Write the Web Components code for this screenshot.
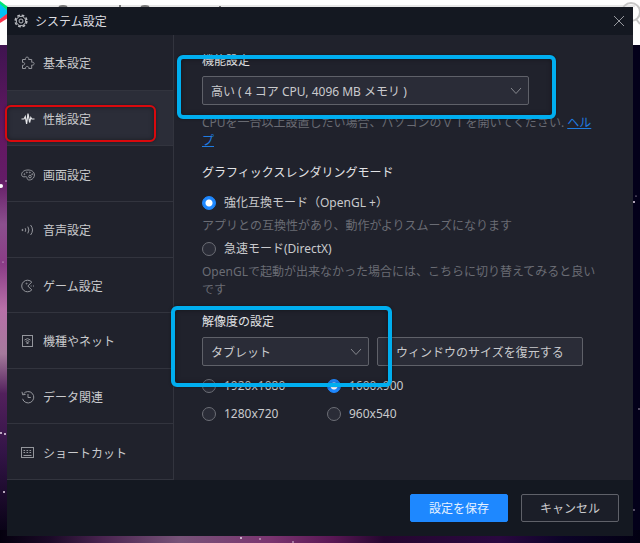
<!DOCTYPE html>
<html lang="ja">
<head>
<meta charset="utf-8">
<meta name="viewport" content="width=device-width, initial-scale=1">
<title>システム設定</title>
<style>
    body {
        margin: 0;
        font: 12px/18px "Noto Sans", "Noto Sans CJK JP", sans-serif;
        color: #c9cacd;
        background: #03001a;
    }
    .desktop {
        box-sizing: border-box;
        display: grid;
        min-height: 100vh;
        padding: 7px;
    }
    settings-section p {
        margin: 0;
        color: #6a6c74;
    }
    settings-section .help {
        margin-top: 9px;
    }
    settings-section a {
        color: #1f7ce0;
        word-break: break-all;
    }
    .modes {
        display: grid;
        gap: 5px;
        margin-top: 12px;
    }
    .row {
        display: flex;
        flex-wrap: wrap;
        gap: 8px;
    }
    .sizes {
        display: grid;
        grid-template-columns: 125px 1fr;
        row-gap: 10px;
        margin-top: 11px;
    }
</style>
</head>
<body>
<desktop-backdrop></desktop-backdrop>
<main class="desktop">
    <settings-dialog>
        <span slot="title">システム設定</span>

        <nav-item slot="nav" icon="puzzle">基本設定</nav-item>
        <nav-item slot="nav" icon="pulse" selected>性能設定</nav-item>
        <nav-item slot="nav" icon="palette">画面設定</nav-item>
        <nav-item slot="nav" icon="sound">音声設定</nav-item>
        <nav-item slot="nav" icon="game">ゲーム設定</nav-item>
        <nav-item slot="nav" icon="network">機種やネット</nav-item>
        <nav-item slot="nav" icon="history">データ関連</nav-item>
        <nav-item slot="nav" icon="keyboard">ショートカット</nav-item>

        <settings-section>
            <label slot="heading" for="performance">機能設定</label>
            <select-box style="--width: 327px">
                <select id="performance">
                    <option>高い ( 4 コア CPU, 4096 MB メモリ )</option>
                </select>
            </select-box>
            <p class="help">CPUを一台以上設置したい場合、パソコンのＶＴを開いてください. <a href="#help">ヘルプ</a></p>
        </settings-section>

        <settings-section>
            <span slot="heading">グラフィックスレンダリングモード</span>
            <div class="modes">
                <radio-choice>
                    <input slot="control" type="radio" name="mode" id="opengl" checked>
                    <label for="opengl">強化互換モード（OpenGL +）</label>
                </radio-choice>
                <p>アプリとの互換性があり、動作がよりスムーズになります</p>
                <radio-choice>
                    <input slot="control" type="radio" name="mode" id="directx">
                    <label for="directx">急速モード(DirectX)</label>
                </radio-choice>
                <p>OpenGLで起動が出来なかった場合には、こちらに切り替えてみると良いです</p>
            </div>
        </settings-section>

        <settings-section>
            <label slot="heading" for="device">解像度の設定</label>
            <div class="row">
                <select-box style="--width: 167px">
                    <select id="device">
                        <option>タブレット</option>
                    </select>
                </select-box>
                <push-button kind="field">ウィンドウのサイズを復元する</push-button>
            </div>
            <div class="sizes">
                <radio-choice>
                    <input slot="control" type="radio" name="size" id="s1920">
                    <label for="s1920">1920x1080</label>
                </radio-choice>
                <radio-choice>
                    <input slot="control" type="radio" name="size" id="s1600" checked>
                    <label for="s1600">1600x900</label>
                </radio-choice>
                <radio-choice>
                    <input slot="control" type="radio" name="size" id="s1280">
                    <label for="s1280">1280x720</label>
                </radio-choice>
                <radio-choice>
                    <input slot="control" type="radio" name="size" id="s960">
                    <label for="s960">960x540</label>
                </radio-choice>
            </div>
        </settings-section>

        <push-button slot="actions" kind="primary">設定を保存</push-button>
        <push-button slot="actions">キャンセル</push-button>
    </settings-dialog>
</main>
<highlight-box style="--line: 2px; --color: #d9090d; left: 5px; top: 105px; width: 151px; height: 37px"></highlight-box>
<highlight-box style="left: 177px; top: 55px; width: 379px; height: 64px"></highlight-box>
<highlight-box style="left: 171px; top: 306px; width: 221px; height: 81px"></highlight-box>

<script>
const icons = {
    puzzle: '<path d="M1.5 3.5H4.6C3.6 .3 8.6 .3 7.600 3.5H10.700V6.300C13.900 5.300 13.900 10 10.700 9V12.500H7.800C8.600 9.800 3.800 9.800 4.600 12.500H1.500V9.200C4.400 9.800 4.400 5.800 1.500 6.400Z"/>',
    pulse: '<path stroke-width="1.2" d="M.5 7H3L4.3 4.5 5.6 12 7 1.5 8.6 10.5 9.8 5.5 10.8 7H13.5"/>',
    palette: '<path d="M7 2C3 2 .6 4.1 .6 6.6C.6 8.6 2.4 9.2 4.3 8.7C6 8.3 6 9.5 6.2 10.5C6.5 12 8 12.2 9.5 11.8C12 11.2 13.4 9.2 13.4 7C13.4 4 10.8 2 7 2Z"/><circle cx="9" cy="8.5" r="1.3"/><circle cx="3.4" cy="6.2" r=".5"/><circle cx="5.8" cy="4.4" r=".5"/><circle cx="8.8" cy="4.4" r=".5"/><circle cx="11.2" cy="6.2" r=".5"/>',
    sound: '<circle cx="1.5" cy="7" r=".6" fill="currentColor"/><path d="M4.2 5.2Q5.4 7 4.2 8.8M6.8 3.6Q9 7 6.8 10.4M9.6 2Q13.4 7 9.6 12"/>',
    game: '<path d="M10.8 3.1A5.8 5.8 0 1 0 10.8 10.9L6.8 7Z"/><circle cx="5.6" cy="4.6" r=".5"/><path d="M9.6 7H10.6M12 7H13"/>',
    network: '<rect x="1.5" y="1.5" width="10" height="11"/><path d="M3.5 6Q6.5 3.2 9.5 6M4.6 7.5Q6.5 5.8 8.4 7.5"/><path d="M5.6 8.7H7.4L6.5 10Z" fill="currentColor"/>',
    history: '<path d="M2.4 4A5.7 5.7 0 1 1 1.6 8.8M1 1.8 1.6 4.8 4.6 4.4M7 4V7.5H9.8"/>',
    keyboard: '<rect x=".5" y="1.5" width="12" height="10"/><path d="M2.5 4.5H10.5M2.5 6.5H10.5" stroke-dasharray="1.6 1.4"/><path d="M2.5 9.5H10.5"/>'
};

const define = (name, html, setup) => {
    const template = document.createElement('template');
    template.innerHTML = html;
    customElements.define(name, class extends HTMLElement {
        constructor() {
            super();
            this.attachShadow({mode: 'open'}).appendChild(template.content.cloneNode(true));
        }
        connectedCallback() {
            if (setup) setup(this, this.shadowRoot);
        }
    });
};

// store window on top, nebula wallpaper below
define('desktop-backdrop', `
    <style>
    :host {
        position: fixed;
        inset: 0;
        z-index: -1;
    }
    svg {
        display: block;
        width: 100%;
        height: 100%;
    }
    </style>
    <svg viewBox="0 0 640 543" preserveAspectRatio="none" aria-hidden="true">
        <defs>
            <linearGradient id="left" x2="0" y2="1">
                <stop offset="0" stop-color="#3f1450"/>
                <stop offset=".18" stop-color="#641862"/>
                <stop offset=".27" stop-color="#641c66"/>
                <stop offset=".36" stop-color="#8b4f8d"/>
                <stop offset=".44" stop-color="#8a3c86"/>
                <stop offset=".53" stop-color="#b870a8"/>
                <stop offset=".62" stop-color="#a57a9c"/>
                <stop offset=".7" stop-color="#52205c"/>
                <stop offset=".82" stop-color="#321446"/>
                <stop offset="1" stop-color="#03000f"/>
            </linearGradient>
            <linearGradient id="bottom">
                <stop offset="0" stop-color="#04000e"/>
                <stop offset=".08" stop-color="#1c0a28"/>
                <stop offset=".16" stop-color="#4a2450"/>
                <stop offset=".28" stop-color="#775378"/>
                <stop offset=".42" stop-color="#7b3570"/>
                <stop offset=".52" stop-color="#591754"/>
                <stop offset=".6" stop-color="#25062f"/>
                <stop offset=".78" stop-color="#2a0840"/>
                <stop offset=".88" stop-color="#0c0328"/>
                <stop offset="1" stop-color="#020012"/>
            </linearGradient>
        </defs>
        <rect width="640" height="543" fill="#03001a"/>
        <rect y="45" width="20" height="498" fill="url(#left)"/>
        <rect y="530" width="640" height="13" fill="url(#bottom)"/>
        <rect width="640" height="45" fill="#fdfdfd"/>
        <path d="M5 5H635V7H5Z" fill="#e6e6e6"/>
        <path d="M0 1 8 7V12L0 5Z" fill="#00e676"/>
        <path d="M0 4 8 11V14L0 19Z" fill="#00c3f5"/>
        <path d="M0 19 8 13V18L0 23Z" fill="#f8334b"/>
        <path d="M59 7Q63 5 67 7M120 5V7M141 7Q145 5 149 7M220 6V7" fill="none" stroke="#777" stroke-width="2"/>
        <circle cx="631" cy="12" r="9" fill="none" stroke="#c6c6c6" stroke-width="2"/>
        <path d="M636 19 640 24" stroke="#c6c6c6" stroke-width="2"/>
        <g fill="#e8d8ea">
            <circle cx="1" cy="186" r="2" fill="#fff"/>
            <circle cx="6" cy="181" r=".7"/>
            <circle cx="3" cy="262" r=".6"/>
            <circle cx="1" cy="433" r="1"/>
            <circle cx="5" cy="434" r="1"/>
            <circle cx="4" cy="492" r="1"/>
            <circle cx="241" cy="538" r="1"/>
            <circle cx="260" cy="539" r=".8"/>
            <circle cx="293" cy="542" r=".8"/>
            <circle cx="634" cy="202" r="1"/>
            <circle cx="636" cy="196" r=".6"/>
            <circle cx="639" cy="409" r=".7"/>
            <circle cx="634" cy="510" r=".7"/>
        </g>
    </svg>
`);

define('settings-dialog', `
    <style>
    :host {
        display: grid;
        grid-template-rows: 28px 1fr 56px;
        background: #20222c;
    }
    header, footer {
        display: flex;
        align-items: center;
        background: #141821;
    }
    header {
        gap: 7px;
        padding: 0 8px 0 7px;
    }
    h1 {
        flex: 1;
        margin: 0;
        padding-top: 2px;
        font: inherit;
        color: #dcdde0;
    }
    svg {
        display: block;
        fill: none;
        stroke: #b8babf;
    }
    .close {
        padding: 0;
        border: 0;
        background: none;
    }
    .close svg {
        stroke: #96989e;
    }
    .body {
        display: grid;
        grid-template-columns: 167px minmax(0, 1fr);
    }
    nav {
        display: grid;
        grid-auto-rows: 1fr;
        border-right: 1px solid #32343e;
    }
    .content {
        display: flex;
        flex-direction: column;
        gap: 14px;
        padding: 17px 33px 16px 28px;
    }
    footer {
        justify-content: flex-end;
        gap: 13px;
        padding: 0 14px;
    }
    </style>
    <header>
        <svg width="14" height="14" viewBox="0 0 14 14" aria-hidden="true">
            <circle cx="7" cy="7" r="5.800" stroke-width="1.600" stroke-dasharray="2.700 1.855"/>
            <circle cx="7" cy="7" r="4.700"/>
            <circle cx="7" cy="7" r="2"/>
        </svg>
        <h1><slot name="title"></slot></h1>
        <button class="close" aria-label="閉じる">
            <svg width="12" height="12" viewBox="0 0 12 12"><path d="M1 1 11 11M11 1 1 11"/></svg>
        </button>
    </header>
    <div class="body">
        <nav><slot name="nav"></slot></nav>
        <div class="content"><slot></slot></div>
    </div>
    <footer><slot name="actions"></slot></footer>
`);

define('nav-item', `
    <style>
    :host {
        display: grid;
        border-bottom: 1px solid #32343e;
    }
    :host([selected]) {
        background: #2b2d38;
    }
    button {
        display: flex;
        align-items: center;
        gap: 8px;
        padding: 2px 15px 0 14px;
        border: 0;
        background: none;
        font: inherit;
        color: inherit;
    }
    span {
        padding-top: 2px;
    }
    svg {
        fill: none;
        stroke: currentColor;
        color: #94969c;
    }
    :host([selected]) svg {
        color: #e4e5e8;
    }
    </style>
    <button>
        <svg width="14" height="14" viewBox="0 0 14 14" aria-hidden="true"></svg>
        <span><slot></slot></span>
    </button>
`, (el, root) => {
    root.querySelector('svg').innerHTML = icons[el.getAttribute('icon')] || '';
});

define('settings-section', `
    <style>
    :host {
        display: block;
    }
    .heading {
        margin-bottom: 6px;
        color: #e2e3e6;
    }
    ::slotted(.modes) {
        margin-top: 12px;
    }
    </style>
    <div class="heading"><slot name="heading"></slot></div>
    <slot></slot>
`);

define('select-box', `
    <style>
    :host {
        display: grid;
        align-items: center;
        width: var(--width);
        max-width: 100%;
    }
    ::slotted(select) {
        grid-area: 1 / 1;
        box-sizing: border-box;
        width: 100%;
        height: 29px;
        padding: 2px 28px 0 8px;
        border: 1px solid #5f6169;
        border-radius: 2px;
        appearance: none;
        background: #2a2c37;
        font: inherit;
        color: inherit;
    }
    svg {
        grid-area: 1 / 1;
        z-index: 1;
        justify-self: end;
        margin-right: 7px;
        fill: none;
        stroke: #85878d;
        pointer-events: none;
    }
    </style>
    <slot></slot>
    <svg width="12" height="8" viewBox="0 0 12 8" aria-hidden="true"><path d="M1 1 6 6.500 11 1"/></svg>
`);

define('radio-choice', `
    <style>
    :host {
        display: flex;
        align-items: center;
        gap: 8px;
    }
    ::slotted(input) {
        box-sizing: border-box;
        width: 14px;
        height: 14px;
        margin: 0;
        border: 1px solid #6c6e76;
        border-radius: 50%;
        appearance: none;
        background: #2a2c37;
    }
    ::slotted(input:checked) {
        border-color: #1e88ff;
        background: radial-gradient(circle, #fff 3px, #1e88ff 4px);
    }
    </style>
    <slot name="control"></slot>
    <slot></slot>
`);

define('push-button', `
    <style>
    :host {
        display: block;
    }
    button {
        box-sizing: border-box;
        min-width: 98px;
        height: 28px;
        padding: 2px 18px 0;
        border: 1px solid #5f6169;
        border-radius: 2px;
        background: #1b1e28;
        font: inherit;
        color: inherit;
    }
    :host([kind="primary"]) button {
        border-color: #1e88ff;
        background: #1e88ff;
        color: #e6f1ff;
    }
    :host([kind="field"]) button {
        height: 29px;
        background: #2a2c37;
    }
    </style>
    <button><slot></slot></button>
`);

// marker frame drawn over the page
define('highlight-box', `
    <style>
    :host {
        position: absolute;
        box-sizing: border-box;
        border: var(--line, 4px) solid var(--color, #00aeef);
        border-radius: 6px;
        box-shadow: 0 0 3px rgba(0, 0, 0, .4), inset 0 0 5px rgba(0, 0, 0, .4);
        pointer-events: none;
    }
    </style>
`);
</script>
</body>
</html>
